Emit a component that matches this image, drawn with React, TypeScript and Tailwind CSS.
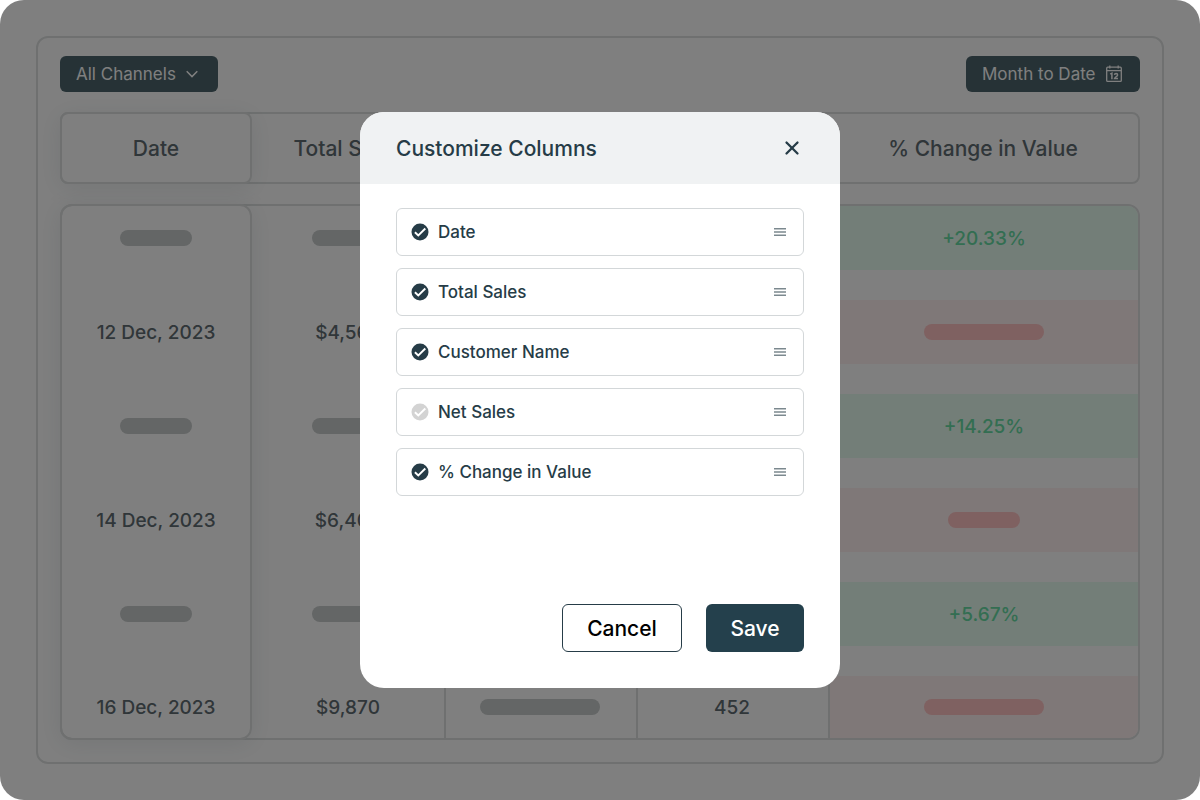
import { useState } from 'react';
import { X } from 'lucide-react';

type Cell = { text?: string; bar?: string };

const short: Cell = { bar: 'w-[72px]' };
const long: Cell = { bar: 'w-[120px]' };

const headers: Cell[] = [{ text: 'Date' }, { text: 'Total Sales' }, long, short, { text: '% Change in Value' }];

const rows: { trend: 'up' | 'down'; cells: Cell[] }[] = [
  { trend: 'up', cells: [short, short, long, short, { text: '+20.33%' }] },
  { trend: 'down', cells: [{ text: '12 Dec, 2023' }, { text: '$4,560' }, long, short, long] },
  { trend: 'up', cells: [short, short, long, short, { text: '+14.25%' }] },
  { trend: 'down', cells: [{ text: '14 Dec, 2023' }, { text: '$6,400' }, long, short, short] },
  { trend: 'up', cells: [short, short, long, short, { text: '+5.67%' }] },
  { trend: 'down', cells: [{ text: '16 Dec, 2023' }, { text: '$9,870' }, long, { text: '452' }, long] },
];

const columnWidths = [
  'w-[190px] shrink-0 pr-0.5',
  'w-48 shrink-0',
  'w-48 shrink-0 pr-0.5',
  'w-48 shrink-0 pr-0.5',
  'min-w-0 flex-1',
];

const initialColumns = [
  { name: 'Date', checked: true },
  { name: 'Total Sales', checked: true },
  { name: 'Customer Name', checked: true },
  { name: 'Net Sales', checked: false },
  { name: '% Change in Value', checked: true },
];

function CheckIcon({ className }: { className: string }) {
  return (
    <svg viewBox="0 0 18 18" className={className} aria-hidden="true">
      <circle cx="9" cy="9" r="8.5" fill="currentColor" />
      <path d="M3.9 9.2l3.4 3.3 7-7" fill="none" stroke="#fff" strokeWidth="1.9" />
    </svg>
  );
}

function CalendarIcon() {
  return (
    <svg viewBox="0 0 18 18" className="size-[18px]" fill="none" stroke="currentColor" aria-hidden="true">
      <rect x="1.7" y="2.2" width="14.6" height="14.2" rx="1" strokeWidth="1.3" />
      <path d="M1.7 5.7h14.6M4.8 .4v3.2M13.2 .4v3.2" strokeWidth="1.3" />
      <path d="M5.2 9.2l1.7-1v6M9.5 9.9c.1-2 3.1-1.9 3.1 0 0 1.3-2.8 2.3-3.1 3.7h3.5" strokeWidth="1.5" />
    </svg>
  );
}

function Toolbar() {
  return (
    <div className="flex items-center justify-between text-[17px] text-white">
      <div className="relative">
        <select
          aria-label="Channel"
          className="h-9 w-[158px] appearance-none rounded-md bg-[#4c646c] px-4 pt-0.5"
        >
          <option>All Channels</option>
        </select>
        <svg
          viewBox="0 0 12 8"
          className="pointer-events-none absolute top-3.5 right-5 h-2 w-3"
          fill="none"
          stroke="currentColor"
          strokeWidth="1.5"
          aria-hidden="true"
        >
          <path d="M.7 1.2L6 6.6l5.3-5.4" />
        </svg>
      </div>
      <button className="flex h-9 w-[174px] items-center justify-between rounded-md bg-[#4c646c] pr-[17px] pl-4">
        <span className="pt-0.5">Month to Date</span>
        <CalendarIcon />
      </button>
    </div>
  );
}

function SalesTable() {
  return (
    <div className="relative mt-5">
      <table className="block text-[#606c72]">
        <thead className="block rounded-lg border-2 border-[#dee1e1] text-[21px]">
          <tr className="flex h-[68px] items-center pt-0.5">
            {headers.map(({ text, bar }, i) => (
              <th key={i} className={`${columnWidths[i]} truncate font-medium`}>
                {text ?? <span className={`mx-auto block h-4 rounded-full bg-[#c8cccc] ${bar}`} />}
              </th>
            ))}
          </tr>
        </thead>
        <tbody className="mt-5 block overflow-hidden rounded-xl border-2 border-[#dee1e1] text-[19px]">
          {rows.map(({ trend, cells }, r) => (
            <tr key={r} className="flex">
              {cells.map((cell, i) => {
                const isChange = i === 4;
                const band = trend === 'up' ? 'bg-[#e6fcf0] text-[#66dca4]' : 'bg-[#fff0f0]';
                const bar = isChange ? 'bg-[#ffc2c2]' : 'bg-[#c8cccc]';
                return (
                  <td
                    key={i}
                    className={`${columnWidths[i]} ${r > 0 ? 'pt-[30px]' : ''} ${i > 1 ? 'border-l-2 border-[#dee1e1]' : ''}`}
                  >
                    <div
                      className={`flex items-center justify-center font-medium ${r === rows.length - 1 ? 'h-[62px]' : 'h-16'} ${isChange ? band : ''}`}
                    >
                      {cell.text ? (
                        <span className="pt-0.5">{cell.text}</span>
                      ) : (
                        <span className={`h-4 rounded-full ${cell.bar} ${bar}`} />
                      )}
                    </div>
                  </td>
                );
              })}
            </tr>
          ))}
        </tbody>
      </table>
      {/* raised frames of the pinned date column */}
      <div className="pointer-events-none absolute top-0 left-0 h-[72px] w-48 rounded-lg border-2 border-[#dee1e1] shadow-[0_4px_24px_rgba(36,64,76,0.1)]" />
      <div className="pointer-events-none absolute top-[92px] bottom-0 left-0 w-48 rounded-xl border-2 border-[#dee1e1] shadow-[0_4px_24px_rgba(36,64,76,0.1)]" />
    </div>
  );
}

function CustomizeDialog() {
  const [columns, setColumns] = useState(initialColumns);

  const toggle = (name: string) =>
    setColumns(columns.map((c) => (c.name === name ? { ...c, checked: !c.checked } : c)));

  return (
    <div
      role="dialog"
      aria-labelledby="dialog-title"
      className="w-full max-w-[480px] overflow-hidden rounded-3xl bg-white text-[#263c47]"
    >
      <div className="flex h-[72px] items-center justify-between bg-[#f0f2f3] px-9">
        <h2 id="dialog-title" className="pt-0.5 text-[21px] font-medium">
          Customize Columns
        </h2>
        <button aria-label="Close" className="flex size-6 items-center justify-center">
          <X size={22} strokeWidth={2.5} />
        </button>
      </div>
      <div className="px-9 pt-6 pb-9">
        <ul className="flex flex-col gap-3">
          {columns.map(({ name, checked }) => (
            <li
              key={name}
              className="flex h-12 items-center justify-between rounded-md border border-[#d3d7d9] pr-[15px] pl-3.5"
            >
              <label className="flex items-center gap-[9px] text-[17px] font-medium">
                <input
                  type="checkbox"
                  className="sr-only"
                  checked={checked}
                  onChange={() => toggle(name)}
                />
                <CheckIcon className={checked ? 'size-[18px] text-[#263c47]' : 'size-[18px] text-[#d3d3d3]'} />
                <span className="pt-0.5">{name}</span>
              </label>
              <button aria-label={`Move ${name}`} className="flex size-4 items-center justify-center text-[#7c898f]">
                <svg viewBox="0 0 12 8" className="h-2 w-3" fill="currentColor" aria-hidden="true">
                  <path d="M0 0h12v1.5H0zM0 3.2h12v1.6H0zM0 6.5h12V8H0z" />
                </svg>
              </button>
            </li>
          ))}
        </ul>
        <div className="mt-27 flex justify-end gap-6 text-[21px] font-medium">
          <button className="h-12 w-[120px] rounded-md border border-[#263c47] pt-0.5 text-black">Cancel</button>
          <button className="h-12 w-[98px] rounded-md bg-[#24404c] pt-0.5 text-white">Save</button>
        </div>
      </div>
    </div>
  );
}

export default function App() {
  return (
    <div className="relative min-h-screen overflow-hidden rounded-3xl bg-white p-9 font-['Inter',sans-serif]">
      <div className="rounded-xl border-2 border-[#dee1e1] px-[22px] pt-[18px] pb-[22px]">
        <Toolbar />
        <SalesTable />
      </div>
      <div className="absolute inset-0 flex items-center justify-center bg-black/50">
        <CustomizeDialog />
      </div>
    </div>
  );
}
